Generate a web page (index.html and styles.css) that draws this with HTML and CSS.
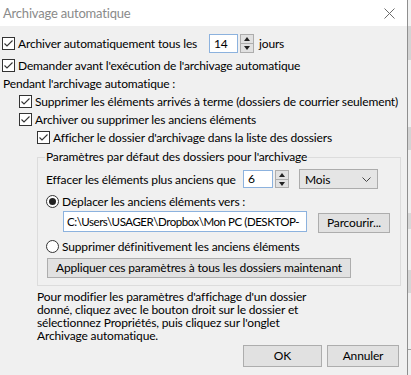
FILE: index.html
```html
<!DOCTYPE html>
<html lang="fr">
<head>
    <meta charset="UTF-8">
    <meta name="viewport" content="width=device-width, initial-scale=1.0">
    <title>Archivage automatique</title>
    <link rel="stylesheet" href="styles.css">
</head>
<body>

    <div class="dialog">
        <div class="titlebar">
            <span class="title">Archivage automatique</span>
            <svg class="close" width="11" height="11" viewBox="0 0 11 11">
                <path d="M0.5 0.5 L10.5 10.5 M10.5 0.5 L0.5 10.5" stroke="#6b6b6b" stroke-width="1" fill="none"/>
            </svg>
        </div>

        <div class="content">
            <div class="row first">
                <svg class="check" viewBox="0 0 13 13"><rect x="0.5" y="0.5" width="12" height="12" fill="#fff" stroke="#333"/><path d="M2.5 6.5 L5 9 L10.5 3.5" stroke="#333" stroke-width="1.1" fill="none"/></svg>
                <span class="label-auto">Archiver automatiquement tous les</span>
                <div class="spin-input days">14</div>
                <div class="spin-btns">
                    <span class="spin-up"></span>
                    <span class="spin-down"></span>
                </div>
                <span class="unit">jours</span>
            </div>

            <div class="row">
                <svg class="check" viewBox="0 0 13 13"><rect x="0.5" y="0.5" width="12" height="12" fill="#fff" stroke="#333"/><path d="M2.5 6.5 L5 9 L10.5 3.5" stroke="#333" stroke-width="1.1" fill="none"/></svg>
                <span>Demander avant l'exécution de l'archivage automatique</span>
            </div>

            <div class="row heading">Pendant l'archivage automatique :</div>

            <div class="row level1">
                <svg class="check" viewBox="0 0 13 13"><rect x="0.5" y="0.5" width="12" height="12" fill="#fff" stroke="#333"/><path d="M2.5 6.5 L5 9 L10.5 3.5" stroke="#333" stroke-width="1.1" fill="none"/></svg>
                <span>Supprimer les éléments arrivés à terme (dossiers de courrier seulement)</span>
            </div>

            <div class="row level1">
                <svg class="check" viewBox="0 0 13 13"><rect x="0.5" y="0.5" width="12" height="12" fill="#fff" stroke="#333"/><path d="M2.5 6.5 L5 9 L10.5 3.5" stroke="#333" stroke-width="1.1" fill="none"/></svg>
                <span>Archiver ou supprimer les anciens éléments</span>
            </div>

            <div class="row level2">
                <svg class="check" viewBox="0 0 13 13"><rect x="0.5" y="0.5" width="12" height="12" fill="#fff" stroke="#333"/><path d="M2.5 6.5 L5 9 L10.5 3.5" stroke="#333" stroke-width="1.1" fill="none"/></svg>
                <span>Afficher le dossier d'archivage dans la liste des dossiers</span>
            </div>

            <fieldset class="group">
                <legend>Paramètres par défaut des dossiers pour l'archivage</legend>

                <div class="row age">
                    <span class="label-age">Effacer les éléments plus anciens que</span>
                    <div class="spin-input months">6</div>
                    <div class="spin-btns small">
                        <span class="spin-up"></span>
                        <span class="spin-down"></span>
                    </div>
                    <div class="combo">
                        <span>Mois</span>
                        <svg width="9" height="5" viewBox="0 0 9 5"><path d="M0.5 0.5 L4.5 4.5 L8.5 0.5" stroke="#444" stroke-width="1" fill="none"/></svg>
                    </div>
                </div>

                <div class="row radio-row move">
                    <svg class="radio" viewBox="0 0 13 13"><circle cx="6.5" cy="6.5" r="6" fill="#fff" stroke="#333"/><circle cx="6.5" cy="6.5" r="3.5" fill="#222"/></svg>
                    <span>Déplacer les anciens éléments vers :</span>
                </div>

                <div class="path-row">
                    <div class="path-input">C:\Users\USAGER\Dropbox\Mon PC (DESKTOP-</div>
                    <button class="btn browse">Parcourir...</button>
                </div>

                <div class="row radio-row delete">
                    <svg class="radio" viewBox="0 0 13 13"><circle cx="6.5" cy="6.5" r="6" fill="#fff" stroke="#333"/></svg>
                    <span>Supprimer définitivement les anciens éléments</span>
                </div>

                <button class="btn apply">Appliquer ces paramètres à tous les dossiers maintenant</button>
            </fieldset>

            <p class="note">Pour modifier les paramètres d'affichage d'un dossier<br>donné, cliquez avec le bouton droit sur le dossier et<br>sélectionnez Propriétés, puis cliquez sur l'onglet<br>Archivage automatique.</p>

            <div class="actions">
                <button class="btn ok">OK</button>
                <button class="btn cancel">Annuler</button>
            </div>
        </div>
    </div>
    <div class="backdrop"></div>

</body>
</html>
```

FILE: styles.css
```css
* {
    margin: 0;
    padding: 0;
    box-sizing: border-box;
}

body {
    width: 411px;
    height: 375px;
    overflow: hidden;
    display: flex;
    font-family: Lato, "Noto Sans", sans-serif;
    font-size: 12px;
    letter-spacing: -0.15px;
    color: #000;
    background: #ececec;
}

.dialog {
    width: 408px;
    height: 375px;
    background: #f0f0f0;
    border-right: 1px solid #8f8f8f;
}

.backdrop {
    flex: 1;
    background: linear-gradient(to bottom,
        #f2f2f2 0, #f2f2f2 26px,
        #d4d4d4 26px, #d4d4d4 60px,
        #f0f0f0 60px, #f0f0f0 127px,
        #d4d4d4 127px, #d4d4d4 150px,
        #f0f0f0 150px, #f0f0f0 213px,
        #d8d8d8 213px, #d8d8d8 229px,
        #f0f0f0 229px, #f0f0f0 270px,
        #d6d6d6 270px, #d6d6d6 293px,
        #f0f0f0 293px, #f0f0f0 349px,
        #a0a0a0 349px, #a0a0a0 350px,
        #f0f0f0 350px);
}

/* barre de titre */
.titlebar {
    height: 26px;
    background: #fff;
    display: flex;
    align-items: center;
    justify-content: space-between;
    padding: 0 12px 0 3px;
}

.title {
    font-size: 13px;
    letter-spacing: -0.2px;
    color: #8a8a8a;
}

.content {
    padding: 8px 0 0 2px;
}

.row {
    display: flex;
    align-items: center;
    height: 18px;
    white-space: nowrap;
}

.row.first {
    height: 19px;
    margin-bottom: 3px;
}

.check,
.radio {
    width: 13px;
    height: 13px;
    flex: none;
    margin-right: 3px;
}

.heading {
    padding-left: 1px;
}

.level1 {
    padding-left: 17px;
}

.level2 {
    padding-left: 35px;
}

.label-auto {
    width: 191px;
}

/* champs numeriques */
.spin-input {
    background: #fff;
    border: 1px solid #8cb2de;
    height: 19px;
    padding-left: 4px;
    line-height: 17px;
}

.days {
    width: 29px;
}

.months {
    width: 30px;
    height: 18px;
    line-height: 16px;
}

.spin-btns {
    width: 14px;
    height: 19px;
    margin-left: 2px;
    display: flex;
    flex-direction: column;
    border: 1px solid #adadad;
    background: #e1e1e1;
}

.spin-btns.small {
    height: 18px;
}

.spin-up,
.spin-down {
    flex: 1;
    position: relative;
}

.spin-up {
    border-bottom: 1px solid #adadad;
}

.spin-up::after,
.spin-down::after {
    content: "";
    position: absolute;
    left: 3px;
    border-left: 3.5px solid transparent;
    border-right: 3.5px solid transparent;
}

.spin-up::after {
    top: 2px;
    border-bottom: 4px solid #222;
}

.spin-down::after {
    top: 2px;
    border-top: 4px solid #222;
}

.unit {
    margin-left: 5px;
}

/* groupe */
.group {
    margin: 3px 0 0 35px;
    width: 364px;
    border: 1px solid #dcdcdc;
    padding: 0 0 7px 8px;
}

.group legend {
    line-height: 16px;
    padding: 0 1px;
    margin-left: -1px;
}

.age {
    margin-top: 4px;
    height: 20px;
}

.label-age {
    width: 197px;
}

.combo {
    margin-left: 10px;
    width: 79px;
    height: 20px;
    background: #e5e5e5;
    border: 1px solid #acacac;
    display: flex;
    align-items: center;
    justify-content: space-between;
    padding: 0 6px 0 5px;
}

.move {
    margin-top: 3px;
    height: 19px;
}

.path-row {
    display: flex;
    height: 22px;
    padding-left: 17px;
}

.path-input {
    width: 244px;
    height: 21px;
    background: #fff;
    border: 1px solid #8cb2de;
    line-height: 19px;
    padding-left: 3px;
    font-size: 11.5px;
    letter-spacing: -0.45px;
    white-space: nowrap;
    overflow: hidden;
}

.btn {
    font-family: Lato, "Noto Sans", sans-serif;
    font-size: 12px;
    letter-spacing: -0.15px;
    color: #000;
    background: #e1e1e1;
    border: 1px solid #adadad;
    height: 20px;
    line-height: 18px;
}

.browse {
    align-self: flex-end;
    margin-left: 11px;
    width: 72px;
}

.delete {
    margin-top: 4px;
}

.apply {
    margin: 3px 0 0 1px;
    width: 304px;
    white-space: nowrap;
}

.note {
    margin: 4px 0 0 35px;
    line-height: 13px;
    white-space: nowrap;
}

.actions {
    display: flex;
    justify-content: flex-end;
    gap: 5px;
    margin-top: 3px;
    padding-right: 8px;
}

.actions .btn {
    height: 22px;
    line-height: 20px;
}

.ok {
    width: 79px;
}

.cancel {
    width: 72px;
}
```
